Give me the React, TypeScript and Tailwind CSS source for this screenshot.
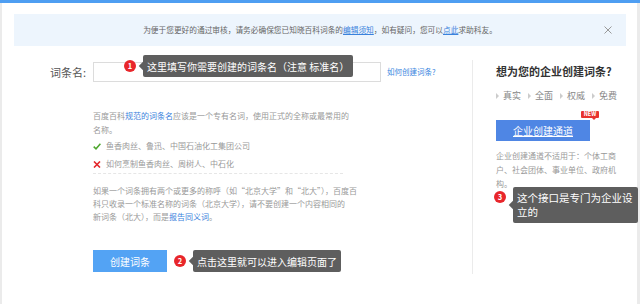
import React from "react";

const font = { fontFamily: '"Noto Sans CJK SC", "Noto Sans", sans-serif' };

function Badge({ n }: { n: string }) {
  return (
    <span className="flex h-[12px] w-[12px] items-center justify-center rounded-full bg-[#e8262b] text-[7.5px] font-bold leading-none text-white">
      {n}
    </span>
  );
}

function Tip({ children, className }: { children: React.ReactNode; className: string }) {
  return (
    <div className={"rounded-[2px] bg-[#5e5e5e] text-white " + className}>
      <span className="absolute left-[-3px] top-1/2 -mt-[3px] h-[6px] w-[6px] rotate-45 bg-[#5e5e5e]" />
      <span className="relative">{children}</span>
    </div>
  );
}

export default function App() {
  return (
    <div className="h-[304px] w-[640px] overflow-hidden bg-white" style={font}>
      <div className="h-[3px] bg-[#4e9ef2]" />
      <div className="flex h-[301px] flex-col border-l-2 border-r-[3px] border-[#ebebeb] pl-[12px] pr-[11px] pt-[11px]">
        {/* notice */}
        <div className="relative flex h-[32px] items-center justify-center bg-[#edf5fd] text-[7.7px] text-[#666]">
          <span>
            为便于您更好的通过审核，请务必确保您已知晓百科词条的
            <span className="text-[#3a82dc] underline">编辑须知</span>
            ，如有疑问，您可以
            <span className="text-[#3a82dc] underline">点此</span>
            求助科友。
          </span>
          <svg className="absolute right-[14px] top-[12px]" width="8" height="8" viewBox="0 0 8 8">
            <path d="M0.5 0.5 L7.5 7.5 M7.5 0.5 L0.5 7.5" stroke="#999" strokeWidth="1" />
          </svg>
        </div>

        {/* main */}
        <div className="mt-[14px] flex">
          {/* left */}
          <div className="w-[458px] pt-[2px]">
            <div className="flex h-[20px] items-center">
              <div className="w-[79px] pr-[7px] text-right text-[11px] text-[#555]">词条名:</div>
              <div className="relative h-[20px] w-[288px] border border-[#dcdcdc]">
                <div className="absolute left-[30px] top-[-3px]">
                  <Badge n="1" />
                </div>
                <Tip className="absolute left-[49px] top-[-8px] flex h-[22px] items-center whitespace-nowrap px-[4px] text-[10px]">
                  这里填写你需要创建的词条名（注意 标准名）
                </Tip>
              </div>
              <span className="ml-[6px] text-[7.5px] text-[#3a86e0]">如何创建词条?</span>
            </div>

            <div className="w-[329px] pl-[79px] text-[8px] text-[#999]">
              <p className="mt-[27px] whitespace-nowrap leading-[14px]">
                百度百科<span className="text-[#3a82dc]">规范的词条名</span>应该是一个专有名词，使用正式的全称或最常用的
                <br />
                名称。
              </p>
              <div className="flex items-center gap-[5px] leading-[18px]">
                <svg width="8" height="7" viewBox="0 0 8 7">
                  <path d="M0.7 3.6 L3 5.8 L7.4 0.8" stroke="#4ea72e" strokeWidth="1.5" fill="none" />
                </svg>
                <span>鱼香肉丝、鲁迅、中国石油化工集团公司</span>
              </div>
              <div className="flex items-center gap-[5px] leading-[18px]">
                <svg width="8" height="7" viewBox="0 0 8 7">
                  <path d="M1 0.5 L7 6.5 M7 0.5 L1 6.5" stroke="#e4262b" strokeWidth="1.6" />
                </svg>
                <span>如何烹制鱼香肉丝、周树人、中石化</span>
              </div>
              <div className="w-[250px] border-b border-dashed border-[#e6e6e6]" />
              <p className="mt-[10px] whitespace-nowrap leading-[13px]">
                如果一个词条拥有两个或更多的称呼（如“北京大学”和“北大”），百度百
                <br />
                科只收录一个标准名称的词条（北京大学），请不要创建一个内容相同的
                <br />
                新词条（北大），而是<span className="text-[#3a82dc]">报告同义词</span>。
              </p>
              <div className="mt-[27px] flex items-center">
                <div className="flex h-[22px] w-[74px] items-center justify-center bg-[#53a3f4] text-[10px] text-white">
                  创建词条
                </div>
                <div className="ml-[7px]">
                  <Badge n="2" />
                </div>
                <Tip className="relative ml-[7px] flex h-[22px] items-center whitespace-nowrap px-[4px] text-[10px]">
                  点击这里就可以进入编辑页面了
                </Tip>
              </div>
            </div>
          </div>

          {/* right */}
          <div className="h-[214px] flex-1 border-l border-[#ebebeb] pl-[23px]">
            <div className="mt-[4px] text-[11px] font-bold leading-[14px] text-[#333]">想为您的企业创建词条?</div>
            <div className="mt-[12px] flex items-center text-[9px] leading-[12px] text-[#888]">
              {["真实", "全面", "权威", "免费"].map((w) => (
                <div key={w} className="mr-[7px] flex items-center">
                  <span className="mr-[4px] h-0 w-0 border-y-[3px] border-l-[3px] border-y-transparent border-l-[#ccc]" />
                  <span>{w}</span>
                </div>
              ))}
            </div>
            <div className="relative mt-[18px] h-[21px] w-[94px]">
              <div className="flex h-[21px] w-[94px] items-center justify-center bg-[#4f86e4] text-[10px] text-white underline">
                企业创建通道
              </div>
              <div className="absolute left-[85px] top-[-9px] flex h-[7px] w-[18px] items-center justify-center rounded-[1px] bg-[#e8332f] text-[5.5px] font-bold leading-none text-white">
                NEW
                <span className="absolute bottom-[-2px] left-[11px] h-0 w-0 border-l-[2px] border-r-[2px] border-t-[2px] border-l-transparent border-r-transparent border-t-[#e8332f]" />
              </div>
            </div>
            <p className="mt-[8px] w-[122px] text-[8px] leading-[14px] text-[#999]">
              企业创建通道不适用于：个体工商户、社会团体、事业单位、政府机构。
            </p>
            <div className="relative ml-[-2px]">
              <Badge n="3" />
              <Tip className="absolute left-[19px] top-[-4px] w-[125px] whitespace-nowrap px-[4px] py-[4px] text-[10.5px] leading-[14px]">
                这个接口是专门为企业设
                <br />
                立的
              </Tip>
            </div>
          </div>
        </div>
      </div>
    </div>
  );
}
